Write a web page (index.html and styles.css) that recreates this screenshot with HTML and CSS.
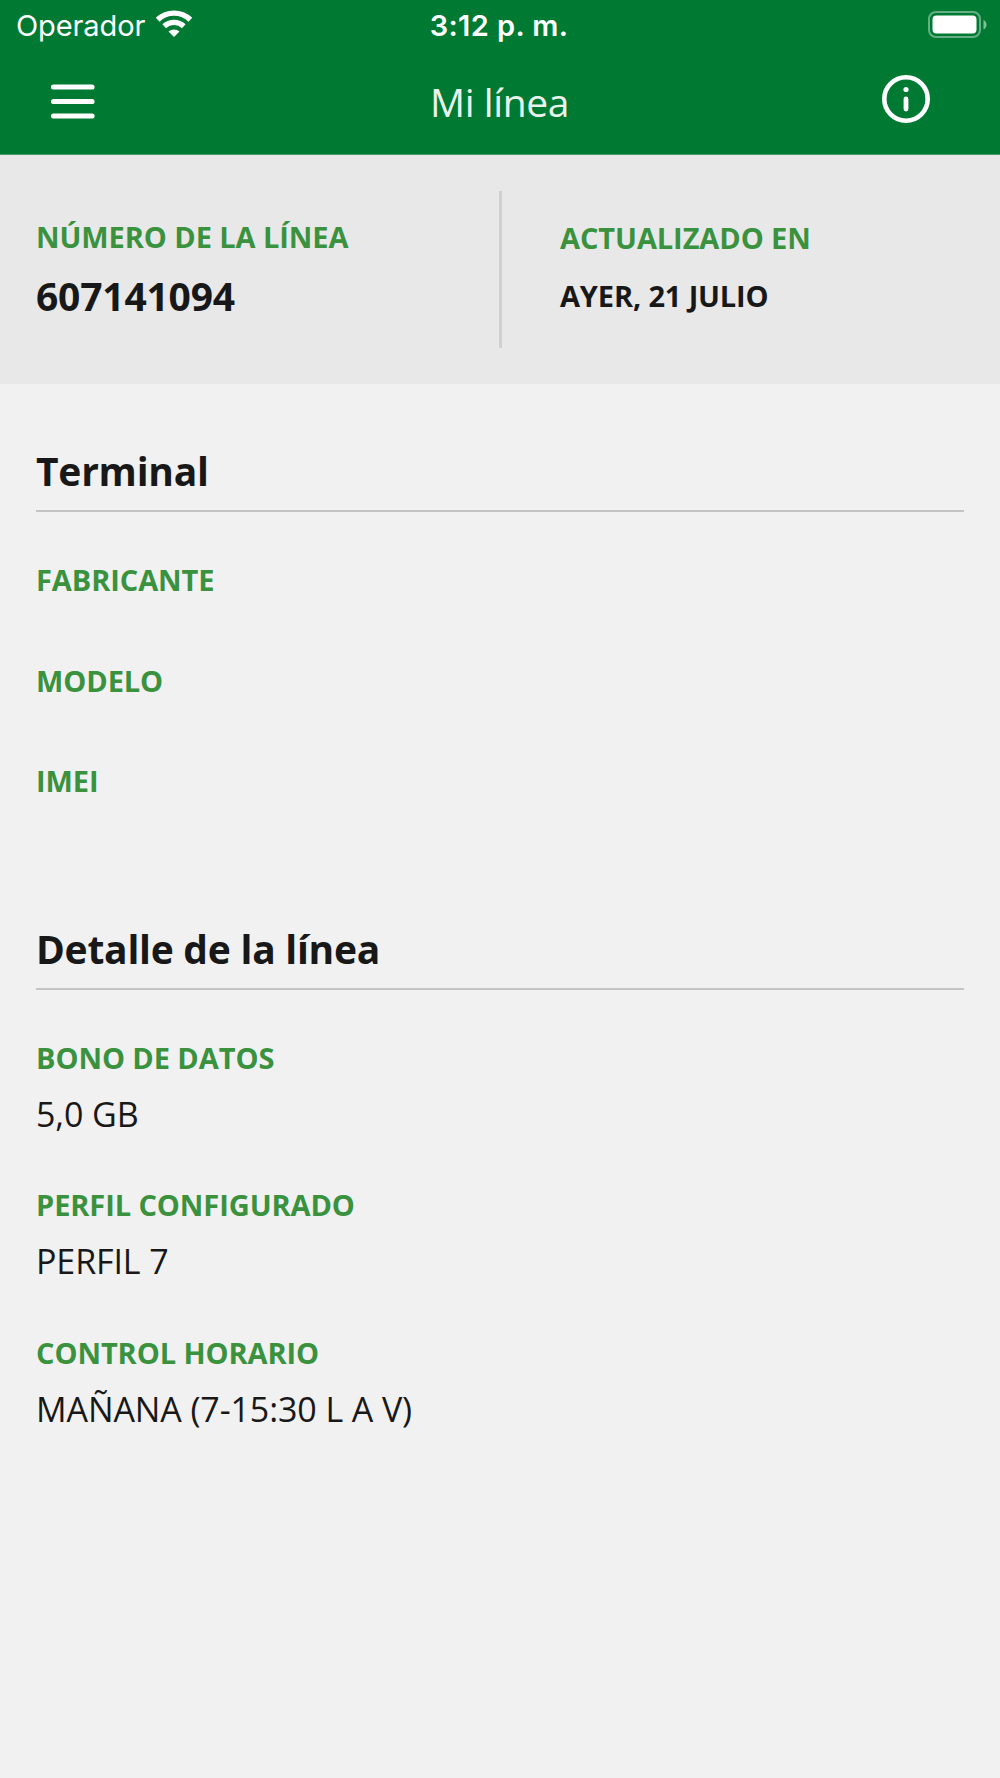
FILE: index.html
```html
<!DOCTYPE html>
<html lang="es">
<head>
    <meta charset="UTF-8">
    <meta name="viewport" content="width=device-width, initial-scale=1.0">
    <title>Mi línea</title>
    <link rel="stylesheet" href="styles.css">
</head>
<body>
    <header class="header">
        <div class="status">
            <div class="carrier">
                <span class="operator">Operador</span>
                <svg class="wifi" width="36" height="27" viewBox="0 0 36 27">
                    <path d="M18 27l-5.500-5.500a8.500 8.500 0 0 1 11 0z" fill="#fff"/>
                    <path d="M8.200 16.200a14.500 14.500 0 0 1 19.600 0M1.700 9.700a23.500 23.500 0 0 1 32.600 0" fill="none" stroke="#fff" stroke-width="5.400"/>
                </svg>
            </div>
            <span class="time">3:12 p. m.</span>
            <svg class="battery" width="59" height="27" viewBox="0 0 59 27">
                <rect x="1" y="1" width="51" height="25" rx="7" fill="none" stroke="#fff" stroke-opacity=".4" stroke-width="2"/>
                <rect x="4.500" y="4.500" width="44" height="18" rx="4" fill="#fff"/>
                <path d="M55.500 9c4 1.500 4 8 0 9.500z" fill="#fff" fill-opacity=".5"/>
            </svg>
        </div>
        <div class="navbar">
            <button class="icon-btn" aria-label="Menú">
                <svg width="44" height="36" viewBox="0 0 44 36">
                    <path d="M2.500 3h38.500M2.500 17.500h38.500M2.500 32h38.500" stroke="#fff" stroke-width="5.200" stroke-linecap="round"/>
                </svg>
            </button>
            <h1 class="title">Mi línea</h1>
            <button class="icon-btn info" aria-label="Información">
                <svg width="48" height="48" viewBox="0 0 48 48">
                    <circle cx="24" cy="24" r="21.700" fill="none" stroke="#fff" stroke-width="4.600"/>
                    <circle cx="24" cy="14.500" r="2.600" fill="#fff"/>
                    <path d="M24 24v10" stroke="#fff" stroke-width="4.800" stroke-linecap="round"/>
                </svg>
            </button>
        </div>
    </header>
    <section class="summary">
        <div class="summary-item">
            <p class="label">NÚMERO DE LA LÍNEA</p>
            <p class="number">607141094</p>
        </div>
        <div class="summary-item updated">
            <p class="label">ACTUALIZADO EN</p>
            <p class="date">AYER, 21 JULIO</p>
        </div>
    </section>
    <main class="content">
        <section class="terminal">
            <h2>Terminal</h2>
            <p class="label">FABRICANTE</p>
            <p class="label">MODELO</p>
            <p class="label">IMEI</p>
        </section>
        <section class="details">
            <h2>Detalle de la línea</h2>
            <p class="label">BONO DE DATOS</p>
            <p class="value">5,0 GB</p>
            <p class="label">PERFIL CONFIGURADO</p>
            <p class="value">PERFIL 7</p>
            <p class="label">CONTROL HORARIO</p>
            <p class="value">MAÑANA (7-15:30 L A V)</p>
        </section>
    </main>
</body>
</html>
```
FILE: styles.css
```css
* {
    box-sizing: border-box;
    margin: 0;
    padding: 0;
}
body {
    min-height: 100vh;
    background: #f1f1f1;
    color: #181818;
    font-family: "Open Sans", sans-serif;
}
.header {
    height: 155px;
    background: #007a33;
    color: #fff;
    border-bottom: 1px solid #3f9a63;
}
.status {
    display: grid;
    grid-template-columns: 1fr auto 1fr;
    align-items: center;
    height: 50px;
    padding: 0 13px 0 16px;
    font-family: Inter, sans-serif;
    font-size: 29px;
}
.carrier {
    display: flex;
    align-items: center;
    gap: 11px;
}
.operator {
    letter-spacing: -0.1px;
}
.wifi {
    margin-bottom: 4px;
}
.time {
    padding-right: 5px;
    font-weight: 600;
    letter-spacing: 0.4px;
}
.battery {
    justify-self: end;
    margin-bottom: 2px;
}
.navbar {
    display: grid;
    grid-template-columns: 1fr auto 1fr;
    align-items: center;
    height: 104px;
    padding: 0 70px 0 50px;
}
.icon-btn {
    display: flex;
    justify-self: start;
    background: none;
    border: none;
}
.icon-btn:first-child {
    padding-left: 1px;
}
.info {
    justify-self: end;
    margin-bottom: 6px;
}
.title {
    padding-left: 19px;
    margin-bottom: 2px;
    color: #eaf4ed;
    font-size: 39px;
    font-weight: 400;
    letter-spacing: -0.4px;
}
.summary {
    display: grid;
    grid-template-columns: 1fr 1fr;
    height: 229px;
    padding: 36px;
    background: #e8e8e8;
}
.summary-item {
    padding-top: 26px;
}
.updated {
    padding-top: 27px;
    padding-left: 58px;
    margin-left: -1px;
    border-left: 3px solid #d0d0d0;
}
.label {
    color: #3a923e;
    font-size: 29px;
    font-weight: 700;
    letter-spacing: -0.08px;
    line-height: 40px;
}
.number {
    margin-top: 12px;
    font-size: 39px;
    font-weight: 700;
    letter-spacing: -0.2px;
    line-height: 54px;
}
.date {
    margin-top: 18px;
    font-size: 29px;
    font-weight: 700;
    letter-spacing: -0.15px;
    line-height: 40px;
}
.content {
    padding: 60px 36px 0;
}
h2 {
    height: 68px;
    margin-bottom: 48px;
    border-bottom: 2px solid #c4c4c4;
    font-size: 39px;
    letter-spacing: -0.25px;
    line-height: 54px;
}
.terminal .label {
    margin-bottom: 60.5px;
}
.details {
    padding-top: 60px;
}
.value {
    margin: 13px 0 47.5px;
    font-size: 34px;
    letter-spacing: -0.1px;
    line-height: 47px;
}
```
